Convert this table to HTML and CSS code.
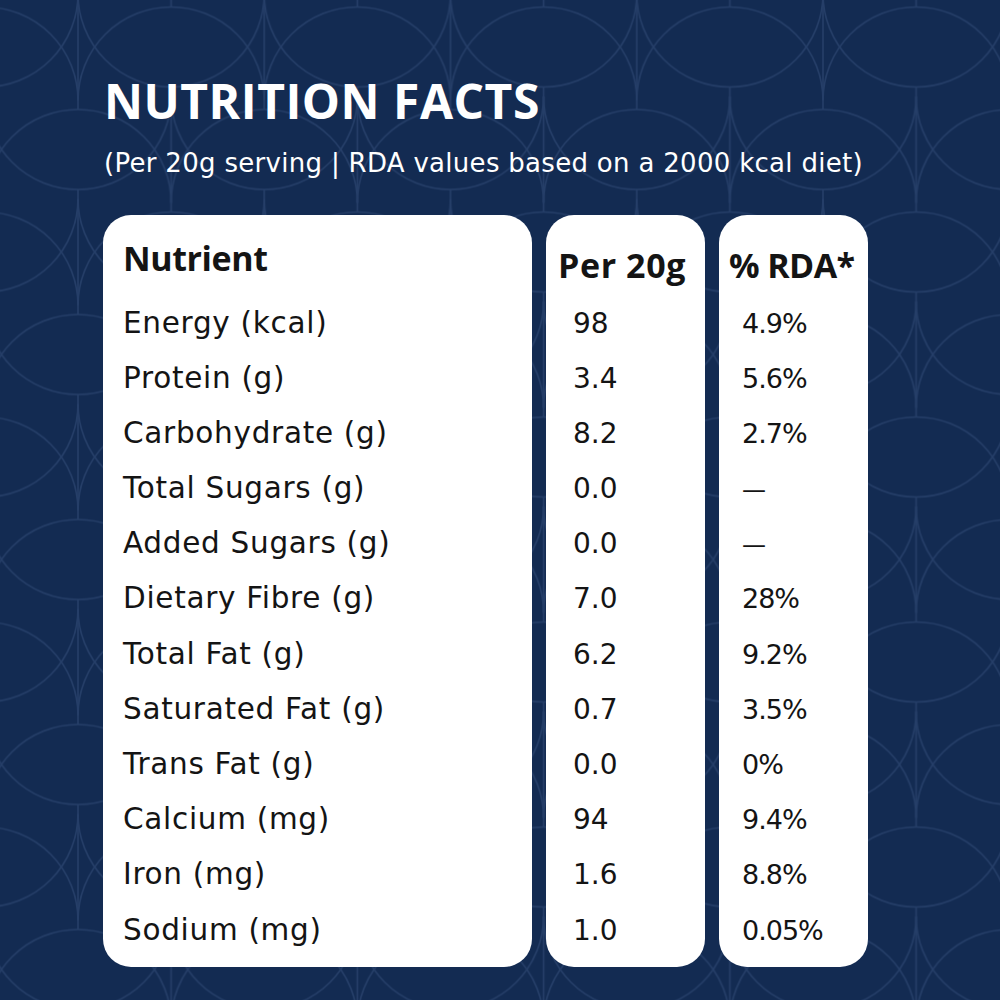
FILE: index.html
```html
<!DOCTYPE html>
<html lang="en">
<head>
<meta charset="utf-8">
<title>Nutrition Facts</title>
<link rel="stylesheet" href="styles.css">
</head>
<body>
<div class="page">
  <svg class="bg-pattern" width="1000" height="1000" viewBox="0 0 1000 1000" aria-hidden="true">
    <defs>
      <g id="lens">
        <path d="M -93.125 53.125 A 93.125 93.125 0 0 1 93.125 53.125"/>
        <path d="M -93.125 -53.125 A 93.125 93.125 0 0 0 93.125 -53.125"/>
      </g>
      <pattern id="ogee" patternUnits="userSpaceOnUse" x="78" y="149.5" width="186.25" height="205">
        <g fill="none" stroke="#253e68" stroke-width="1.6">
          <use href="#lens" x="0" y="0"/>
          <use href="#lens" x="186.25" y="0"/>
          <use href="#lens" x="0" y="205"/>
          <use href="#lens" x="186.25" y="205"/>
          <use href="#lens" x="93.125" y="102.5"/>
          <line x1="0" y1="40" x2="0" y2="165"/>
          <line x1="186.25" y1="40" x2="186.25" y2="165"/>
          <line x1="93.125" y1="0" x2="93.125" y2="62.5"/>
          <line x1="93.125" y1="142.5" x2="93.125" y2="205"/>
        </g>
      </pattern>
    </defs>
    <rect width="1000" height="1000" fill="url(#ogee)"/>
  </svg>

  <main class="content">
    <h1 class="title">NUTRITION FACTS</h1>
    <p class="subtitle">(Per 20g serving | RDA values based on a 2000 kcal diet)</p>

    <div class="cards">
      <section class="card card-nutrient">
        <div class="card-head">Nutrient</div>
        <div class="row">Energy (kcal)</div>
        <div class="row">Protein (g)</div>
        <div class="row">Carbohydrate (g)</div>
        <div class="row">Total Sugars (g)</div>
        <div class="row">Added Sugars (g)</div>
        <div class="row">Dietary Fibre (g)</div>
        <div class="row">Total Fat (g)</div>
        <div class="row">Saturated Fat (g)</div>
        <div class="row">Trans Fat (g)</div>
        <div class="row">Calcium (mg)</div>
        <div class="row">Iron (mg)</div>
        <div class="row">Sodium (mg)</div>
      </section>

      <section class="card card-amount">
        <div class="card-head">Per 20g</div>
        <div class="row">98</div>
        <div class="row">3.4</div>
        <div class="row">8.2</div>
        <div class="row">0.0</div>
        <div class="row">0.0</div>
        <div class="row">7.0</div>
        <div class="row">6.2</div>
        <div class="row">0.7</div>
        <div class="row">0.0</div>
        <div class="row">94</div>
        <div class="row">1.6</div>
        <div class="row">1.0</div>
      </section>

      <section class="card card-rda">
        <div class="card-head">% RDA*</div>
        <div class="row">4.9%</div>
        <div class="row">5.6%</div>
        <div class="row">2.7%</div>
        <div class="row"><span class="dash">—</span></div>
        <div class="row"><span class="dash">—</span></div>
        <div class="row">28%</div>
        <div class="row">9.2%</div>
        <div class="row">3.5%</div>
        <div class="row">0%</div>
        <div class="row">9.4%</div>
        <div class="row">8.8%</div>
        <div class="row">0.05%</div>
      </section>
    </div>
  </main>
</div>
</body>
</html>
```

FILE: styles.css
```css
html, body {
  margin: 0;
  padding: 0;
  background: #132b52;
}

body {
  font-family: "Open Sans", "Noto Sans", sans-serif;
}

.page {
  position: relative;
  width: 1000px;
  height: 1000px;
  overflow: hidden;
  background: #132b52;
}

.bg-pattern {
  position: absolute;
  top: 0;
  left: 0;
  z-index: 0;
}

.content {
  position: relative;
  z-index: 1;
  padding: 77px 0 0 103px;
}

.title {
  margin: 0;
  padding-left: 1px;
  font-family: "Open Sans", "Noto Sans", sans-serif;
  font-weight: 700;
  font-size: 48px;
  line-height: 48px;
  letter-spacing: 0.5px;
  color: #ffffff;
}

.subtitle {
  margin: 25px 0 0 0;
  padding-left: 1px;
  font-family: "DejaVu Sans", "Open Sans", sans-serif;
  font-weight: 400;
  font-size: 26px;
  line-height: 26px;
  letter-spacing: 0.3px;
  color: #ffffff;
}

.cards {
  display: flex;
  gap: 14px;
  margin-top: 39px;
}

.card {
  box-sizing: border-box;
  height: 752px;
  background: #ffffff;
  border-radius: 28px;
  color: #141414;
}

.card-nutrient { width: 429px; }
.card-amount { width: 159px; }
.card-rda { width: 149px; }

.card-head {
  box-sizing: border-box;
  height: 80.5px;
  font-family: "Open Sans", "Noto Sans", sans-serif;
  font-weight: 700;
  font-size: 34px;
  line-height: 34px;
  white-space: nowrap;
}

.card-nutrient .card-head { padding: 26px 0 0 20px; letter-spacing: -0.4px; }
.card-amount .card-head { padding: 33px 0 0 12px; letter-spacing: 0.6px; }
.card-rda .card-head { padding: 33px 0 0 10px; letter-spacing: -0.6px; }

.row {
  height: 55.2px;
  font-family: "DejaVu Sans", "Open Sans", sans-serif;
  font-size: 28px;
  line-height: 55.2px;
  white-space: nowrap;
}

.card-nutrient .row {
  padding-left: 20px;
  font-size: 29.5px;
  letter-spacing: 0.7px;
}
.card-amount .row { padding-left: 27px; }
.card-rda .row {
  padding-left: 23px;
  font-size: 27px;
  letter-spacing: -1px;
}

.dash {
  font-size: 24px;
  letter-spacing: 0;
}
```
